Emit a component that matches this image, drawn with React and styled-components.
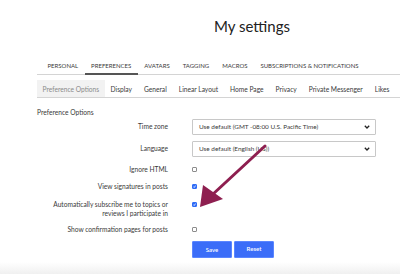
import React from 'react'
import styled, { createGlobalStyle } from 'styled-components'

const Global = createGlobalStyle`
  html, body {
    margin: 0;
    padding: 0;
    background: #fff;
    overflow: hidden;
  }
  body {
    font-family: Lato, "Open Sans", sans-serif;
    color: #333;
  }
`

const Screen = styled.div`
  position: relative;
  width: 400px;
  height: 274px;
  overflow: hidden;
`

const Page = styled.div`
  width: 430px;
  margin-left: 37px;
`

const Title = styled.h1`
  margin: 0;
  padding-top: 16px;
  height: 20px;
  line-height: 20px;
  font-size: 15px;
  font-weight: 400;
  text-align: center;
  color: #222;
`

const Tabs = styled.div`
  display: flex;
  margin-top: 21px;
  padding-left: 4px;
  border-bottom: 1px solid #d4d4d4;
`

const Tab = styled.div`
  height: 18px;
  box-sizing: border-box;
  margin-bottom: -1px;
  padding: 0 6.5px;
  display: flex;
  align-items: center;
  font-size: 6px;
  text-transform: uppercase;
  color: #3a3a3a;
  border-bottom: 2px solid ${p => (p.$active ? '#555' : 'transparent')};
`

const SubTabs = styled.div`
  display: flex;
  margin-top: 5px;
  border-bottom: 1px solid #d4d4d4;
`

const SubTab = styled.div`
  height: 17px;
  padding: 0 ${p => (p.$active ? 5.5 : 6)}px;
  display: flex;
  align-items: center;
  font-size: 6.65px;
  color: ${p => (p.$active ? '#8a8a8a' : '#3a3a3a')};
  background: ${p => (p.$active ? '#f2f2f2' : 'transparent')};
`

const Form = styled.div`
  padding-top: 10px;
`

const Heading = styled.div`
  font-size: 6.65px;
  line-height: 9px;
  color: #3a3a3a;
`

const Row = styled.div`
  display: flex;
  align-items: ${p => (p.$center ? 'center' : 'flex-start')};
  margin-top: ${p => p.$mt}px;
`

const Label = styled.div`
  width: 131px;
  flex: none;
  text-align: right;
  font-size: 6.65px;
  line-height: 9px;
  color: #3a3a3a;
`

const Control = styled.div`
  margin-left: 24px;
  display: flex;
  align-items: center;
  min-height: 9px;
`

const Select = styled.div`
  width: 184px;
  height: 16px;
  box-sizing: border-box;
  border: 1px solid #c8c8c8;
  border-radius: 1px;
  padding: 0 5px 0 6px;
  display: flex;
  align-items: center;
  justify-content: space-between;
  font-size: 6.4px;
  color: #3a3a3a;
`

const Box = styled.span`
  width: 5px;
  height: 5px;
  box-sizing: border-box;
  border-radius: 1px;
  border: 1px solid ${p => (p.$checked ? '#2f6cf6' : '#8c8c8c')};
  background: ${p => (p.$checked ? '#2f6cf6' : '#fff')};
  display: flex;
  align-items: center;
  justify-content: center;
`

const Buttons = styled.div`
  display: flex;
  gap: 2px;
  margin-left: 155px;
  margin-top: 6.5px;
`

const Button = styled.button`
  width: 40px;
  height: 17px;
  padding: 0 0 ${p => p.$lift || 0}px;
  border: 1px solid #5b86ff;
  border-radius: 1px;
  background: #3b6df8;
  color: #fff;
  font-family: Lato, "Open Sans", sans-serif;
  font-size: 6px;
  font-weight: 600;
`

const Footer = styled.div`
  position: absolute;
  left: 0;
  right: 0;
  bottom: 0;
  height: 12px;
  background: linear-gradient(to bottom, rgba(238, 238, 238, 0), #f0f0f0);
`

const Annotation = styled.svg`
  position: absolute;
  left: 0;
  top: 0;
  pointer-events: none;
`

const Chevron = () => (
  <svg width="6" height="4" viewBox="0 0 6 4">
    <path d="M0.8 0.8 L3 3 L5.2 0.8" fill="none" stroke="#222" strokeWidth="1.3" />
  </svg>
)

const Check = ({ checked }) => (
  <Box $checked={checked}>
    {checked && (
      <svg width="3" height="3" viewBox="0 0 3 3">
        <path d="M0.3 1.6 L1.2 2.5 L2.7 0.5" fill="none" stroke="#fff" strokeWidth="0.8" />
      </svg>
    )}
  </Box>
)

const tabs = ['Personal', 'Preferences', 'Avatars', 'Tagging', 'Macros', 'Subscriptions & Notifications']
const subTabs = ['Preference Options', 'Display', 'General', 'Linear Layout', 'Home Page', 'Privacy', 'Private Messenger', 'Likes']

export default function App() {
  return (
    <Screen>
      <Global />
      <Page>
        <Title>My settings</Title>
        <Tabs>
          {tabs.map(t => (
            <Tab key={t} $active={t === 'Preferences'}>{t}</Tab>
          ))}
        </Tabs>
        <SubTabs>
          {subTabs.map(t => (
            <SubTab key={t} $active={t === 'Preference Options'}>{t}</SubTab>
          ))}
        </SubTabs>
        <Form>
          <Heading>Preference Options</Heading>
          <Row $center $mt={1.5}>
            <Label>Time zone</Label>
            <Control>
              <Select>Use default (GMT -08:00 U.S. Pacific Time)<Chevron /></Select>
            </Control>
          </Row>
          <Row $center $mt={6}>
            <Label>Language</Label>
            <Control>
              <Select>Use default (English (US))<Chevron /></Select>
            </Control>
          </Row>
          <Row $mt={8.5}>
            <Label>Ignore HTML</Label>
            <Control><Check /></Control>
          </Row>
          <Row $mt={8}>
            <Label>View signatures in posts</Label>
            <Control><Check checked /></Control>
          </Row>
          <Row $mt={9}>
            <Label>Automatically subscribe me to topics or reviews I participate in</Label>
            <Control><Check checked /></Control>
          </Row>
          <Row $mt={7}>
            <Label>Show confirmation pages for posts</Label>
            <Control><Check /></Control>
          </Row>
          <Buttons>
            <Button>Save</Button>
            <Button $lift={2}>Reset</Button>
          </Buttons>
        </Form>
      </Page>
      <Footer />
      <Annotation width="400" height="274" viewBox="0 0 400 274">
        <line x1="265" y1="146" x2="212" y2="195" stroke="#8e1f50" strokeWidth="3" strokeLinecap="round" />
        <polygon points="203,185 223,199 200,207" fill="#8e1f50" />
      </Annotation>
    </Screen>
  )
}
